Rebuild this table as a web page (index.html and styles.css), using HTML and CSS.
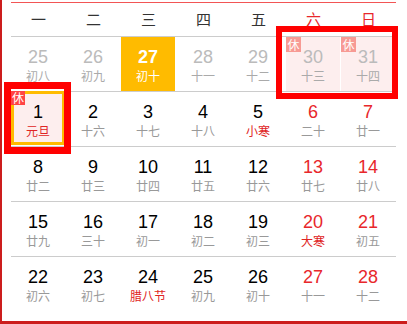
FILE: index.html
```html
<!DOCTYPE html>
<html lang="zh-CN">
<head>
<meta charset="utf-8">
<title>日历</title>
<link rel="stylesheet" href="styles.css">
</head>
<body>
<div class="frame">
  <div class="cal">
    <div class="head">
      <span>一</span><span>二</span><span>三</span><span>四</span><span>五</span><span class="wk">六</span><span class="wk">日</span>
    </div>
    <div class="row">
      <div class="cell other"><span class="num">25</span><span class="lunar">初八</span></div>
      <div class="cell other"><span class="num">26</span><span class="lunar">初九</span></div>
      <div class="cell today"><span class="num">27</span><span class="lunar">初十</span></div>
      <div class="cell other"><span class="num">28</span><span class="lunar">十一</span></div>
      <div class="cell other"><span class="num">29</span><span class="lunar">十二</span></div>
      <div class="cell other rest"><span class="badge badge-soft">休</span><span class="num">30</span><span class="lunar">十三</span></div>
      <div class="cell other rest"><span class="badge badge-soft">休</span><span class="num">31</span><span class="lunar">十四</span></div>
    </div>
    <div class="row">
      <div class="cell rest picked"><span class="badge">休</span><span class="num">1</span><span class="lunar fest">元旦</span></div>
      <div class="cell"><span class="num">2</span><span class="lunar">十六</span></div>
      <div class="cell"><span class="num">3</span><span class="lunar">十七</span></div>
      <div class="cell"><span class="num">4</span><span class="lunar">十八</span></div>
      <div class="cell"><span class="num">5</span><span class="lunar fest">小寒</span></div>
      <div class="cell weekend"><span class="num">6</span><span class="lunar">二十</span></div>
      <div class="cell weekend"><span class="num">7</span><span class="lunar">廿一</span></div>
    </div>
    <div class="row">
      <div class="cell"><span class="num">8</span><span class="lunar">廿二</span></div>
      <div class="cell"><span class="num">9</span><span class="lunar">廿三</span></div>
      <div class="cell"><span class="num">10</span><span class="lunar">廿四</span></div>
      <div class="cell"><span class="num">11</span><span class="lunar">廿五</span></div>
      <div class="cell"><span class="num">12</span><span class="lunar">廿六</span></div>
      <div class="cell weekend"><span class="num">13</span><span class="lunar">廿七</span></div>
      <div class="cell weekend"><span class="num">14</span><span class="lunar">廿八</span></div>
    </div>
    <div class="row">
      <div class="cell"><span class="num">15</span><span class="lunar">廿九</span></div>
      <div class="cell"><span class="num">16</span><span class="lunar">三十</span></div>
      <div class="cell"><span class="num">17</span><span class="lunar">初一</span></div>
      <div class="cell"><span class="num">18</span><span class="lunar">初二</span></div>
      <div class="cell"><span class="num">19</span><span class="lunar">初三</span></div>
      <div class="cell weekend"><span class="num">20</span><span class="lunar fest">大寒</span></div>
      <div class="cell weekend"><span class="num">21</span><span class="lunar">初五</span></div>
    </div>
    <div class="row last">
      <div class="cell"><span class="num">22</span><span class="lunar">初六</span></div>
      <div class="cell"><span class="num">23</span><span class="lunar">初七</span></div>
      <div class="cell"><span class="num">24</span><span class="lunar fest">腊八节</span></div>
      <div class="cell"><span class="num">25</span><span class="lunar">初九</span></div>
      <div class="cell"><span class="num">26</span><span class="lunar">初十</span></div>
      <div class="cell weekend"><span class="num">27</span><span class="lunar">十一</span></div>
      <div class="cell weekend"><span class="num">28</span><span class="lunar">十二</span></div>
    </div>
  </div>
  <div class="mark mark-a"></div>
  <div class="mark mark-b"></div>
</div>
</body>
</html>
```
FILE: styles.css
```css
* { box-sizing: border-box; }
html, body { margin: 0; padding: 0; background: #fff; }
body {
  font-family: "Liberation Sans", "Noto Sans CJK SC", sans-serif;
}
.frame {
  position: relative;
  width: 407px;
  height: 324px;
  border-left: 2px solid #cc1d1d;
  border-bottom: 3px solid #cc1d1d;
}
.cal {
  margin-left: 9px;
  width: 385px;
  padding-top: 2px;
}
.head {
  display: grid;
  grid-template-columns: repeat(7, 55px);
  height: 35px;
  border-top: 1px solid #f25555;
  border-bottom: 1px solid #cccccc;
  align-items: center;
}
.head span {
  text-align: center;
  font-family: "Noto Sans CJK SC", sans-serif;
  font-size: 15px;
  line-height: 18px;
  color: #333;
  padding-bottom: 1px;
}
.head .wk { color: #e8272b; }
.row {
  display: grid;
  grid-template-columns: repeat(7, 55px);
  height: 55px;
  border-bottom: 1px solid #cccccc;
}
.row.last { border-bottom: none; }
.cell {
  position: relative;
  width: 54px;
  height: 54px;
  padding-top: 10px;
  display: flex;
  flex-direction: column;
  align-items: center;
}
.num {
  font-size: 18px;
  line-height: 20px;
  color: #000;
}
.lunar {
  margin-top: 2px;
  font-family: "Noto Sans CJK SC", sans-serif;
  font-size: 12px;
  line-height: 14px;
  color: #999;
}
.lunar.fest { color: #e02424; }
.other .num { color: #bbbbbb; }
.other .lunar { color: #aaaaaa; }
.weekend .num { color: #e8272b; }
.today { background: #ffbb00; }
.today .num { color: #fff; font-weight: bold; }
.today .lunar { color: #fff; }
.rest { background: #fdeeee; }
.picked {
  border: 3px solid #ffbb00;
  margin-top: -1px;
  padding-top: 8px;
}
.badge {
  position: absolute;
  top: 0;
  left: 0;
  width: 15px;
  height: 15px;
  background: #ff4444;
  color: #fff;
  font-family: "Noto Sans CJK SC", sans-serif;
  font-size: 12px;
  line-height: 15px;
  text-align: center;
}
.picked .badge {
  top: -3px;
  left: -3px;
  width: 14px;
  height: 14px;
  line-height: 14px;
}
.badge-soft { background: #f79a94; }
.mark {
  position: absolute;
  border: 6px solid #ff0000;
}
.mark-a {
  left: 274px;
  top: 26px;
  width: 122px;
  height: 73px;
}
.mark-b {
  left: 2px;
  top: 82px;
  width: 67px;
  height: 72px;
  border-width: 7px;
}
```
